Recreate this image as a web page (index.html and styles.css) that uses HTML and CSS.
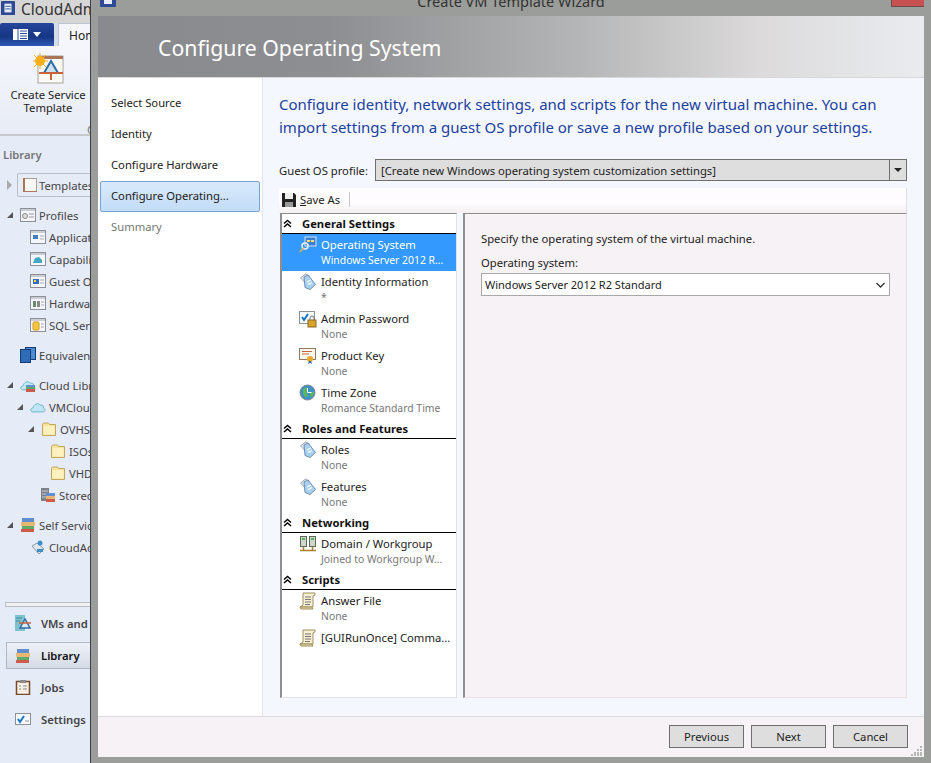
FILE: index.html
```html
<!DOCTYPE html>
<html>
<head>
<meta charset="utf-8"/>
<title>Create VM Template Wizard</title>
<link rel="stylesheet" href="styles.css">
</head>
<body>

<svg class="defs" width="0" height="0">
  <symbol id="i-tag" viewBox="0 0 18 18">
    <path d="M1.500 5l5-4 4 2-5 6z" fill="#dfe3e8" stroke="#a2aab3"/>
    <path d="M5 4l4-2 7.500 9.500-5.500 5-5-2z" fill="#a9d0f0" stroke="#6d8fb5"/>
    <path d="M8 9l4-2M9 11.500l4-2" stroke="#fff" stroke-width="1.200"/>
  </symbol>
  <symbol id="i-scroll" viewBox="0 0 18 18">
    <path d="M4 1h12v2l-2 1v11H1l3-2z" fill="#f6eed2" stroke="#a08f5e"/>
    <path d="M6 5h6M6 7.500h6M6 10h6M6 12.500h5" stroke="#777"/>
    <path d="M1 15h12l1 2H2z" fill="#e5d7a8" stroke="#a08f5e"/>
  </symbol>
  <symbol id="i-form" viewBox="0 0 16 16">
    <rect x=".5" y="1.500" width="15" height="13" fill="#f4f6fa" stroke="#8c8f96"/>
    <rect x="1" y="2" width="14" height="2" fill="#c9ccd2"/>
  </symbol>
  <symbol id="i-folder" viewBox="0 0 16 16">
    <path d="M1.500 14.500V3.500l1-1.500h5l1 1.500h6v11z" fill="#f6e39c" stroke="#c2a75c"/>
    <path d="M2.500 5h11v8.500h-11z" fill="#fdf1c0"/>
  </symbol>
  <symbol id="i-books" viewBox="0 0 16 16">
    <rect x="2" y="1" width="12" height="4" fill="#5f8fd0"/>
    <rect x="1" y="5" width="14" height="4" fill="#eab770"/>
    <rect x="2" y="9" width="12" height="3" fill="#5faa6a"/>
    <rect x="1" y="12" width="13" height="3" fill="#cf5a4e"/>
  </symbol>
  <symbol id="i-cloud" viewBox="0 0 18 14">
    <path d="M3 12.500C0 12.500 0 8 3.500 8 4 4 9 1.500 11.500 5 14.500 4 16 6.500 15 8c2.500 1 2.500 4.500-.5 4.500z" fill="#bfe6f2" stroke="#62b2cc"/>
  </symbol>
  <symbol id="i-chev" viewBox="0 0 9 9">
    <path d="M1 4.500l3.500-3 3.500 3M1 8l3.500-3 3.500 3" fill="none" stroke="#000" stroke-width="1.500"/>
  </symbol>
</svg>

<!-- window behind the wizard -->
<div class="app">
  <div class="app-title">
    <svg class="app-logo" viewBox="0 0 16 16"><rect width="16" height="16" rx="1" fill="#2f4a94"/><rect x="4" y="3" width="8" height="10" fill="#e8ecf6"/><path d="M5 6h6M5 9h6" stroke="#2f4a94"/></svg>
    <span>CloudAdmin</span>
  </div>
  <div class="tabs">
    <div class="file-tab">
      <svg width="15" height="11" viewBox="0 0 15 11"><rect width="15" height="11" fill="#fff"/><path d="M5 0v11M7 2h7M7 4.500h7M7 7h7M7 9.500h7" stroke="#2a4c9c"/></svg>
      <i class="caret-white"></i>
    </div>
    <div class="home-tab">Home</div>
  </div>
  <div class="ribbon">
    <svg class="ribbon-icon" viewBox="0 0 32 32">
      <rect x="5" y="3" width="25" height="27" fill="#fbf9f3" stroke="#a8a296"/>
      <rect x="5" y="3" width="25" height="3" fill="#a9745a"/>
      <path d="M18 8l-7 12h14z" fill="#cfe2f2" stroke="#2f6ea6" stroke-width="2"/>
      <path d="M6 20h24M18 21v6" stroke="#c9643a" stroke-width="2"/>
      <circle cx="7" cy="8" r="5" fill="#f7b51d"/>
      <path d="M7 0v16M-1 8h16M1 2l12 12M13 2L1 14" stroke="#f7a81d"/>
    </svg>
    <div class="ribbon-label">Create Service Template</div>
    <div class="ribbon-group">Create</div>
  </div>

  <div class="side-head">Library</div>
  <div class="tree">
    <div class="row row-boxed"><i class="arrow-closed"></i><svg class="ic" viewBox="0 0 16 16"><rect x="1.500" y="1.500" width="13" height="13" fill="#fbf9f3" stroke="#a8a296"/><path d="M1 1h2v14H1zM1 14h14v1H1z" fill="#a9745a"/></svg><span>Templates</span></div>
    <div class="row lvl0 gap"><span class="slot"><i class="arrow-open"></i></span><svg class="ic" viewBox="0 0 16 16"><use href="#i-form"/><circle cx="5" cy="9" r="2.500" fill="#ddd" stroke="#888"/><path d="M9 7h5M9 10h5" stroke="#999"/></svg><span>Profiles</span></div>
    <div class="row lvl1"><svg class="ic" viewBox="0 0 16 16"><use href="#i-form"/><rect x="3" y="6" width="5" height="4" fill="#3f7ec4"/><path d="M10 7h4M10 10h4" stroke="#aaa"/></svg><span>Application</span></div>
    <div class="row lvl1"><svg class="ic" viewBox="0 0 16 16"><use href="#i-form"/><path d="M3 12l2-5 4-1 3 3v3z" fill="#3fa9c4"/></svg><span>Capability</span></div>
    <div class="row lvl1"><svg class="ic" viewBox="0 0 16 16"><use href="#i-form"/><rect x="3" y="6" width="6" height="5" fill="#2f6ec4"/><path d="M4 7h2v2H4z" fill="#ffd84a"/><path d="M10 7h4M10 10h4" stroke="#aaa"/></svg><span>Guest OS</span></div>
    <div class="row lvl1"><svg class="ic" viewBox="0 0 16 16"><use href="#i-form"/><rect x="3" y="6" width="3" height="6" fill="#6a8a6a"/><rect x="7" y="6" width="3" height="6" fill="#8a8a8a"/><path d="M11 7h3M11 10h3" stroke="#aaa"/></svg><span>Hardware</span></div>
    <div class="row lvl1"><svg class="ic" viewBox="0 0 16 16"><use href="#i-form"/><rect x="3" y="5" width="6" height="8" rx="1" fill="#f4c73f" stroke="#d19b20"/><path d="M11 7h3M11 10h3" stroke="#aaa"/></svg><span>SQL Server</span></div>
    <div class="row nohead gap"><svg class="ic" viewBox="0 0 16 16"><rect x="5.500" y=".5" width="10" height="12" fill="#4f8ad0" stroke="#123c7c"/><rect x=".5" y="2.500" width="10" height="13" fill="#2e6cb8" stroke="#123c7c"/></svg><span>Equivalent</span></div>
    <div class="row lvl0 gap"><span class="slot"><i class="arrow-open"></i></span><svg class="ic" viewBox="0 0 16 16"><use href="#i-cloud"/><rect x="6" y="8" width="9" height="2" fill="#5f8fd0"/><rect x="6" y="10" width="9" height="2" fill="#5faa6a"/><rect x="6" y="12" width="9" height="3" fill="#cf5a4e"/></svg><span>Cloud Libraries</span></div>
    <div class="row lvl1b"><span class="slot"><i class="arrow-open"></i></span><svg class="ic"><use href="#i-cloud"/></svg><span>VMCloud</span></div>
    <div class="row lvl2"><span class="slot"><i class="arrow-open"></i></span><svg class="ic"><use href="#i-folder"/></svg><span>OVHS</span></div>
    <div class="row lvl3"><svg class="ic"><use href="#i-folder"/></svg><span>ISOs</span></div>
    <div class="row lvl3"><svg class="ic"><use href="#i-folder"/></svg><span>VHD</span></div>
    <div class="row lvl2b"><svg class="ic" viewBox="0 0 16 16"><rect x="1" y="1" width="8" height="13" fill="#7c8288"/><path d="M2 4h6M2 7h6M2 10h6" stroke="#c8ccd0"/><rect x="6" y="6" width="9" height="3" fill="#5f8fd0"/><rect x="6" y="9" width="9" height="3" fill="#eab770"/><rect x="6" y="12" width="9" height="3" fill="#cf5a4e"/></svg><span>Stored</span></div>
    <div class="row lvl0 gap"><span class="slot"><i class="arrow-open"></i></span><svg class="ic"><use href="#i-books"/></svg><span>Self Service</span></div>
    <div class="row lvl1"><svg class="ic" viewBox="0 0 16 16"><path d="M2 7l5-3 7 6-5 5z" fill="#dfe6ee" stroke="#8c98a6"/><circle cx="10" cy="4" r="2.500" fill="#3f8fc9"/><path d="M7 10h6v3H7z" fill="#3f8fc9"/></svg><span>CloudAdmin</span></div>
  </div>

  <div class="nav-split"></div>
  <div class="wunder">
    <div class="wunder-row"><svg class="wic" viewBox="0 0 16 16"><rect x="0" y="0" width="10" height="16" fill="#7fc2cf"/><path d="M1 3h6M1 6h4" stroke="#3a8a9c"/><path d="M10 4l-5 9h10z" fill="#dfeaf4" stroke="#2f6ea6" stroke-width="1.500"/><path d="M4 8h12" stroke="#c9643a" stroke-width="1.500"/></svg>VMs and Services</div>
    <div class="wunder-row active"><svg class="wic"><use href="#i-books"/></svg>Library</div>
    <div class="wunder-row"><svg class="wic" viewBox="0 0 16 16"><rect x="1.500" y="2.500" width="13" height="13" fill="#f5efe4" stroke="#7b4a2a" stroke-width="1.500"/><rect x="5" y="1" width="6" height="3" fill="#8a8a8a"/><path d="M4 7h2M4 10h2M8 7h4M8 10h4" stroke="#8b8b8b"/></svg>Jobs</div>
    <div class="wunder-row"><svg class="wic" viewBox="0 0 16 16"><rect x=".5" y="2.500" width="15" height="11" fill="#f5f7fb" stroke="#8c8f96"/><path d="M3 8l2 3 4-6" fill="none" stroke="#1478c8" stroke-width="2"/><path d="M10 10h4" stroke="#999"/></svg>Settings</div>
  </div>
</div>

<!-- wizard dialog -->
<div class="wizard">
  <div class="wiz-title">
    <svg class="wiz-logo" viewBox="0 0 16 16"><rect width="16" height="16" rx="1" fill="#2f4a94"/><rect x="4" y="3" width="8" height="10" fill="#e8ecf6"/></svg>
    <span class="wiz-caption">Create VM Template Wizard</span>
    <div class="close-btn"></div>
  </div>
  <div class="wiz-head"><h1>Configure Operating System</h1></div>
  <div class="wiz-body">
    <ul class="steps">
      <li>Select Source</li>
      <li>Identity</li>
      <li>Configure Hardware</li>
      <li class="current">Configure Operating...</li>
      <li class="disabled">Summary</li>
    </ul>
    <div class="main">
      <p class="intro">Configure identity, network settings, and scripts for the new virtual machine. You can import settings from a guest OS profile or save a new profile based on your settings.</p>
      <div class="profile-row">
        <label>Guest OS profile:</label>
        <div class="combo">
          <span class="combo-text">[Create new Windows operating system customization settings]</span>
          <span class="combo-btn"><i class="caret-dark"></i></span>
        </div>
      </div>
      <div class="toolbar">
        <svg class="save-ic" viewBox="0 0 16 16"><path d="M1 1h12l2 2v12H1z" fill="#222"/><rect x="4" y="1" width="8" height="6" fill="#eee"/><rect x="4" y="10" width="8" height="5" fill="#999"/></svg>
        <span class="save-as"><u>S</u>ave As</span>
        <span class="tool-sep"></span>
      </div>
      <div class="panes">
        <div class="list">
          <div class="sec first"><svg class="chev"><use href="#i-chev"/></svg>General Settings</div>
          <div class="item selected">
            <svg class="item-ic" viewBox="0 0 18 18"><rect x="6" y="1" width="11" height="9" fill="#3c7fcf" stroke="#d7e3f2"/><path d="M8 4h3v2H8zM12 4h3v2h-3z" fill="#ffe07a"/><circle cx="6" cy="10" r="3" fill="none" stroke="#eee" stroke-width="1.500"/><path d="M4 12l-3 4" stroke="#c9b06a" stroke-width="2"/></svg>
            <div><div class="item-name">Operating System</div><div class="item-val">Windows Server 2012 R...</div></div>
          </div>
          <div class="item">
            <svg class="item-ic"><use href="#i-tag"/></svg>
            <div><div class="item-name">Identity Information</div><div class="item-val">*</div></div>
          </div>
          <div class="item">
            <svg class="item-ic" viewBox="0 0 18 18"><rect x=".5" y="1.500" width="15" height="12" fill="#f5f7fb" stroke="#8c8f96"/><path d="M3 7l2 3 4-6" fill="none" stroke="#1478c8" stroke-width="2"/><rect x="9" y="10" width="8" height="7" fill="#d6a32e" stroke="#8c6a1a"/><path d="M11 10V8a2 2 0 014 0v2" fill="none" stroke="#777"/></svg>
            <div><div class="item-name">Admin Password</div><div class="item-val">None</div></div>
          </div>
          <div class="item">
            <svg class="item-ic" viewBox="0 0 18 18"><rect x=".5" y="1.500" width="16" height="11" fill="#fbf7ec" stroke="#8c7a60"/><path d="M3 4.500h10M3 7h7" stroke="#c9643a"/><circle cx="11" cy="12" r="3" fill="#e8a52c"/><path d="M10 14l-1 3 2-1 2 1-1-3" fill="#2f6ea6"/></svg>
            <div><div class="item-name">Product Key</div><div class="item-val">None</div></div>
          </div>
          <div class="item">
            <svg class="item-ic" viewBox="0 0 18 18"><circle cx="8.500" cy="8.500" r="7.500" fill="#3f8fc9" stroke="#7d8790"/><path d="M4 5l4-2 1 3-2 2 2 3-2 3-3-4zM11 8h4l-1 4-3 1z" fill="#5cb85c"/><path d="M8.500 4v4.500h4" fill="none" stroke="#fff"/></svg>
            <div><div class="item-name">Time Zone</div><div class="item-val">Romance Standard Time</div></div>
          </div>
          <div class="sec"><svg class="chev"><use href="#i-chev"/></svg>Roles and Features</div>
          <div class="item">
            <svg class="item-ic"><use href="#i-tag"/></svg>
            <div><div class="item-name">Roles</div><div class="item-val">None</div></div>
          </div>
          <div class="item">
            <svg class="item-ic"><use href="#i-tag"/></svg>
            <div><div class="item-name">Features</div><div class="item-val">None</div></div>
          </div>
          <div class="sec"><svg class="chev"><use href="#i-chev"/></svg>Networking</div>
          <div class="item">
            <svg class="item-ic" viewBox="0 0 18 18"><rect x="1.500" y="1.500" width="6" height="10" fill="#cfd6c8" stroke="#5a6a5a"/><rect x="10.500" y="1.500" width="6" height="10" fill="#cfd6c8" stroke="#5a6a5a"/><path d="M3 4h3M12 4h3" stroke="#3aa04a" stroke-width="1.500"/><path d="M4.500 12v3M13.500 12v3M1 15.500h16" stroke="#a8822a" stroke-width="1.500"/></svg>
            <div><div class="item-name">Domain / Workgroup</div><div class="item-val">Joined to Workgroup W...</div></div>
          </div>
          <div class="sec"><svg class="chev"><use href="#i-chev"/></svg>Scripts</div>
          <div class="item">
            <svg class="item-ic"><use href="#i-scroll"/></svg>
            <div><div class="item-name">Answer File</div><div class="item-val">None</div></div>
          </div>
          <div class="item">
            <svg class="item-ic"><use href="#i-scroll"/></svg>
            <div><div class="item-name">[GUIRunOnce] Comma...</div></div>
          </div>
        </div>
        <div class="detail">
          <p class="detail-text">Specify the operating system of the virtual machine.</p>
          <div class="detail-label">Operating system:</div>
          <div class="os-select">
            <span>Windows Server 2012 R2 Standard</span>
            <svg width="9" height="6" viewBox="0 0 9 6"><path d="M.5 1l4 4 4-4" fill="none" stroke="#333" stroke-width="1.300"/></svg>
          </div>
        </div>
      </div>
    </div>
  </div>
  <div class="wiz-foot">
    <button class="btn">Previous</button>
    <button class="btn">Next</button>
    <button class="btn">Cancel</button>
    <svg class="grip" viewBox="0 0 11 11"><path d="M9 1h2v2H9zM6 4h2v2H6zM9 4h2v2H9zM3 7h2v2H3zM6 7h2v2H6zM9 7h2v2H9zM0 9h2v2H0zM3 9h2v2H3zM6 9h2v2H6zM9 9h2v2H9z" fill="#b6b8b6"/></svg>
  </div>
</div>

</body>
</html>
```

FILE: styles.css
```css
html, body {
   margin: 0;
   height: 100%;
   overflow: hidden;
}

body {
   position: relative;
   width: 931px;
   height: 763px;
   font-family: "Noto Sans", "Open Sans", sans-serif;
   font-size: 11.25px;
   color: #222;
   background: #9b9d9a;
}

.defs {
   position: absolute;
}

/* back window */
.app {
   position: absolute;
   left: 0;
   top: 0;
   width: 91px;
   height: 763px;
   overflow: hidden;
   background: #e6ebf8;
   display: flex;
   flex-direction: column;
   white-space: nowrap;
}

.app-title {
   height: 23px;
   flex: none;
   display: flex;
   align-items: flex-start;
   gap: 6px;
   padding: 1px 0 0 1px;
   box-sizing: border-box;
   background: #d6d6d6;
   font-size: 15.5px;
   line-height: 16px;
   color: #333;
}

.app-logo {
   width: 14px;
   height: 14px;
   flex: none;
}

.tabs {
   height: 23px;
   flex: none;
   display: flex;
   background: #d6dcea;
}

.file-tab {
   width: 54px;
   flex: none;
   display: flex;
   align-items: center;
   justify-content: center;
   gap: 5px;
   background: linear-gradient(#24459a, #173684 60%, #2f5bb5);
   border-radius: 2px 2px 0 0;
}

.caret-white {
   border: 4px solid transparent;
   border-top: 5px solid #fff;
   border-bottom: 0;
}

.home-tab {
   flex: none;
   margin-left: 4px;
   padding: 3px 0 0 10px;
   width: 60px;
   background: #f4f6fb;
   border: 1px solid #bcc3d2;
   border-bottom: 0;
   font-size: 12px;
}

.ribbon {
   height: 90px;
   flex: none;
   position: relative;
   background: linear-gradient(#f4f6fb, #e8ecf5);
   border-bottom: 2px solid #c6c8cc;
   box-sizing: border-box;
   text-align: center;
   width: 96px;
}

.ribbon-icon {
   display: block;
   width: 32px;
   height: 32px;
   margin: 7px 0 0 33px;
}

.ribbon-label {
   width: 96px;
   white-space: normal;
   line-height: 13px;
   margin-top: 3px;
}

.ribbon-group {
   position: absolute;
   left: 87px;
   top: 76px;
   color: #777;
}

.side-head {
   margin: 11px 0 0 3px;
   height: 17px;
   font-weight: 600;
   color: #777;
}

.tree {
   margin-top: 10px;
   color: #444;
}

.row {
   height: 22px;
   display: flex;
   align-items: center;
   gap: 3px;
}

.row.gap {
   margin-top: 8px;
}

.ic {
   width: 16px;
   height: 16px;
   flex: none;
}

.slot {
   width: 10px;
   flex: none;
   display: flex;
}

.lvl0 { padding-left: 7px; }
.lvl1 { padding-left: 30px; }
.lvl1b { padding-left: 17px; }
.lvl2 { padding-left: 28px; }
.lvl2b { padding-left: 40px; }
.lvl3 { padding-left: 50px; }
.nohead { padding-left: 20px; }

.row-boxed {
   margin: 0 0 0 7px;
   gap: 1px;
   position: relative;
}

.row-boxed::after {
   content: "";
   position: absolute;
   left: 10px;
   top: -1px;
   right: -4px;
   bottom: -1px;
   border: 1px solid #b9bdc6;
   border-radius: 2px;
}

.row-boxed .ic {
   margin-left: 4px;
}

.arrow-open {
   width: 0;
   height: 0;
   flex: none;
   border-left: 6px solid transparent;
   border-bottom: 6px solid #555;
}

.arrow-closed {
   width: 0;
   height: 0;
   flex: none;
   border: 5px solid transparent;
   border-left: 5px solid #aaa;
   border-right: 0;
   margin-right: 5px;
}

.nav-split {
   height: 3px;
   margin: 44px 0 0 5px;
   background: #f0f0f0;
   border: 1px solid #b9bdc6;
   border-right: 0;
   flex: none;
}

.wunder {
   font-weight: 600;
   color: #444;
}

.wunder-row {
   height: 32px;
   display: flex;
   align-items: center;
   gap: 10px;
   padding-left: 15px;
   box-sizing: border-box;
}

.wunder-row.active {
   height: 27px;
   margin: 3px 0 2px 6px;
   padding-left: 8px;
   color: #111;
   background: linear-gradient(#eef1f7, #d5dbe6);
   border: 1px solid #b0b6c4;
   border-right: 0;
}

.wic {
   width: 16px;
   height: 16px;
   flex: none;
}

/* wizard */
.wizard {
   position: absolute;
   left: 90px;
   top: 0;
   width: 841px;
   height: 763px;
   box-sizing: border-box;
   border-left: 1px solid #3a3f4a;
   padding: 0 7px 6px 7px;
   background: #9b9d9a;
   display: flex;
   flex-direction: column;
}

.wiz-title {
   height: 16px;
   flex: none;
   position: relative;
   overflow: hidden;
}

.wiz-logo {
   position: absolute;
   left: 2px;
   top: -9px;
   width: 16px;
   height: 16px;
}

.wiz-caption {
   position: absolute;
   left: 0;
   right: 0;
   top: -9px;
   text-align: center;
   font-size: 14.5px;
   line-height: 20px;
   color: #333;
}

.close-btn {
   position: absolute;
   right: -1px;
   top: -1px;
   width: 32px;
   height: 6px;
   background: #c75050;
   border: 1px solid #6e4a48;
}

.wiz-head {
   height: 62px;
   flex: none;
   box-sizing: border-box;
   display: flex;
   align-items: center;
   padding: 2px 0 0 60px;
   border-bottom: 1px solid #d8d8dc;
   background: linear-gradient(90deg, #888a8d, #8d8e91 28%, #b4b5b6 58%, #dcdadb 80%, #e9ecef);
}

.wiz-head h1 {
   margin: 0;
   font-size: 21.25px;
   font-weight: 400;
   color: #fff;
}

.wiz-body {
   flex: 1;
   min-height: 0;
   display: flex;
   background: #f5f7ff;
}

.steps {
   width: 165px;
   box-sizing: border-box;
   flex: none;
   margin: 0;
   padding: 10px 2px 0;
   list-style: none;
   background: #fff;
   border-right: 1px solid #dfe3ee;
}

.steps li {
   height: 31px;
   line-height: 30px;
   padding-left: 11px;
   box-sizing: border-box;
   color: #222;
}

.steps li.current {
   background: linear-gradient(#d9e9fb, #c3dcf8);
   border: 1px solid #7da2ce;
   border-radius: 2px;
   padding-left: 10px;
   line-height: 28px;
}

.steps li.disabled {
   color: #777;
}

.main {
   flex: 1;
   min-width: 0;
   box-sizing: border-box;
   padding: 15px 17px 18px 16px;
   display: flex;
   flex-direction: column;
}

.intro {
   margin: 0;
   font-size: 15px;
   line-height: 23px;
   color: #1b419c;
}

.profile-row {
   margin-top: 20px;
   display: flex;
   align-items: center;
   gap: 6px;
}

.profile-row label {
   width: 90px;
   flex: none;
   white-space: nowrap;
}

.combo {
   flex: 1;
   height: 22px;
   box-sizing: border-box;
   display: flex;
   border: 1px solid #707070;
   background: #dedede;
}

.combo-text {
   flex: 1;
   padding-left: 5px;
   line-height: 21px;
}

.combo-btn {
   width: 16px;
   border-left: 1px solid #707070;
   display: flex;
   align-items: center;
   justify-content: center;
}

.caret-dark {
   border: 4px solid transparent;
   border-top: 4px solid #222;
   border-bottom: 0;
}

.toolbar {
   margin-top: 7px;
   height: 25px;
   flex: none;
   box-sizing: border-box;
   display: flex;
   align-items: center;
   padding: 0 0 2px 2px;
   background: linear-gradient(#fefcfe 60%, #f4f0f2);
   border-right: 1px solid #e0dee0;
}

.save-ic {
   width: 16px;
   height: 16px;
}

.save-as {
   margin-left: 3px;
}

.tool-sep {
   width: 1px;
   height: 15px;
   margin-left: 9px;
   background: #c8c8c8;
}

.panes {
   flex: 1;
   min-height: 0;
   display: flex;
   gap: 6px;
}

.list {
   width: 177px;
   box-sizing: border-box;
   flex: none;
   margin-left: 1px;
   background: #fff;
   border: 1px solid #8e8e8e;
   border-width: 1px 1px 1px 2px;
   border-right-color: #e2e2e2;
   border-bottom-color: #e2e2e2;
   white-space: nowrap;
}

.sec {
   height: 20px;
   box-sizing: border-box;
   border-bottom: 1px solid #000;
   font-weight: 700;
   color: #111;
   line-height: 19px;
   display: flex;
   align-items: center;
}

.chev {
   width: 9px;
   height: 9px;
   margin: 0 10px 0 1px;
   flex: none;
}

.item {
   height: 37px;
   box-sizing: border-box;
   display: flex;
   padding: 2px 0 0 17px;
   gap: 4px;
}

.item-ic {
   width: 18px;
   height: 18px;
   flex: none;
}

.item-name {
   line-height: 17px;
   color: #222;
}

.item-val {
   font-size: 10.4px;
   line-height: 17px;
   color: #777;
   margin-top: -1px;
}

.item.selected {
   background: #3399ff;
}

.item.selected .item-name,
.item.selected .item-val {
   color: #fff;
}

.detail {
   flex: 1;
   min-width: 0;
   box-sizing: border-box;
   padding: 17px 16px 0;
   background: #f7f2f6;
   border: 1px solid #8e8e8e;
   border-width: 1px 1px 1px 2px;
   border-right-color: #e6e2e4;
   border-bottom-color: #e6e2e4;
}

.detail-text {
   margin: 0;
}

.detail-label {
   margin-top: 9px;
}

.os-select {
   margin-top: 3px;
   height: 23px;
   box-sizing: border-box;
   display: flex;
   align-items: center;
   justify-content: space-between;
   padding: 0 4px 0 3px;
   background: #fff;
   border: 1px solid #a8a8a8;
   font-size: 11px;
}

.wiz-foot {
   height: 41px;
   flex: none;
   box-sizing: border-box;
   position: relative;
   display: flex;
   justify-content: flex-end;
   gap: 7px;
   padding: 8px 16px 0 0;
   background: #f7f2f6;
   border-top: 1px solid #dcdcdc;
}

.btn {
   width: 75px;
   height: 23px;
   padding: 0;
   font: inherit;
   color: #222;
   background: #dedede;
   border: 1px solid #707070;
}

.grip {
   position: absolute;
   right: 2px;
   bottom: 1px;
   width: 11px;
   height: 11px;
}
```
